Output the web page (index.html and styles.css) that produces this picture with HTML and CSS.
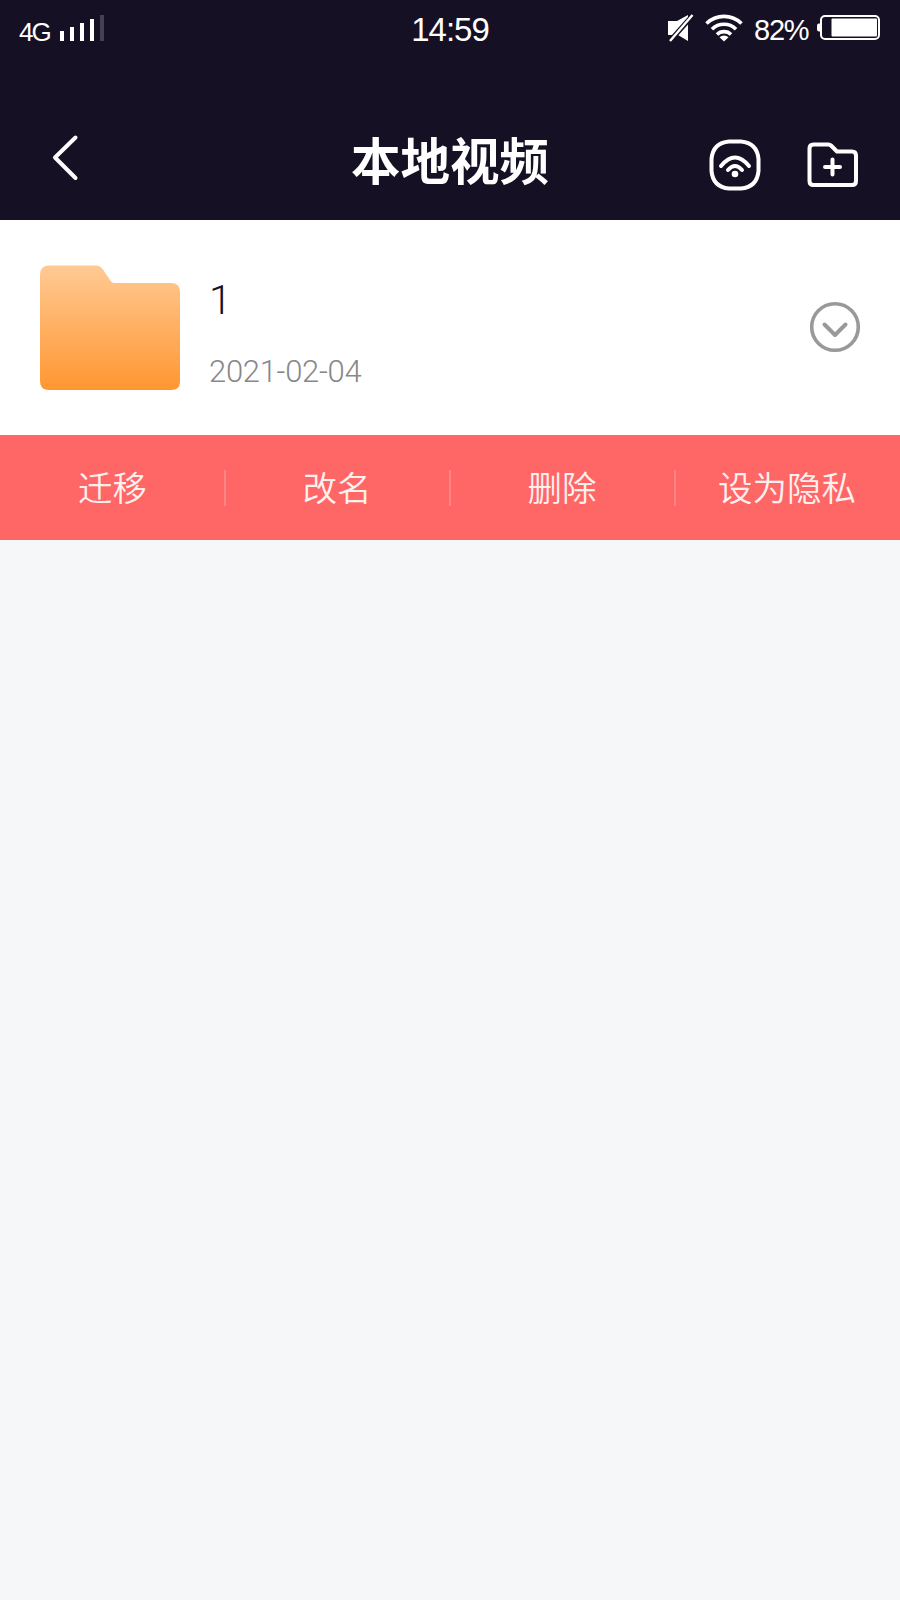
FILE: index.html
```
<!DOCTYPE html>
<html lang="zh-CN">
<head>
    <meta charset="UTF-8">
    <title>本地视频</title>
    <link rel="stylesheet" href="styles.css">
</head>
<body>
<div class="status">
    <div class="status-left">
        <span class="net">4G</span>
        <svg class="signal" width="45" height="28" viewBox="0 0 45 28" fill="#fff">
            <rect x="0" y="17" width="4" height="10"/>
            <rect x="10" y="13" width="4" height="14"/>
            <rect x="20" y="9" width="4" height="18"/>
            <rect x="30" y="5" width="4" height="22"/>
            <rect x="40" y="1" width="4" height="26" fill="#454150"/>
        </svg>
    </div>
    <div class="time">14:59</div>
    <div class="status-right">
        <svg class="mute" width="28" height="28" viewBox="0 0 28 28">
            <path d="M1 7h9L21 1v26l-10-6H1z" fill="#fff"/>
            <path d="M26 1L3 27" stroke="#151023" stroke-width="5"/>
            <path d="M25.500 1L3 27" stroke="#fff" stroke-width="2.400"/>
        </svg>
        <svg class="wifi" width="38" height="28" viewBox="0 0 38 28" fill="none" stroke="#fff" stroke-width="3.600">
            <path d="M1.500 9.500a25 25 0 0 1 35 0"/>
            <path d="M7 15.200a17 17 0 0 1 24 0"/>
            <path d="M12 20.500a10 10 0 0 1 14 0"/>
            <path d="M14.500 23.200a6.500 6.500 0 0 1 9 0L19 27.500z" fill="#fff" stroke="none"/>
        </svg>
        <span class="percent">82%</span>
        <svg class="battery" width="65" height="28" viewBox="0 0 65 28">
            <path d="M4 9.500H3a2 2 0 0 0-2 2v4a2 2 0 0 0 2 2h1z" fill="#fff"/>
            <rect x="5" y="2" width="58" height="23" rx="4" fill="none" stroke="#fff" stroke-width="2"/>
            <rect x="15.500" y="4.500" width="45.500" height="18" rx="1" fill="#fff"/>
        </svg>
    </div>
</div>

<div class="header">
    <svg class="back" width="30" height="50" viewBox="0 0 30 50" fill="none" stroke="#fff" stroke-width="4" stroke-linecap="round" stroke-linejoin="round">
        <path d="M25.500 4.500L5 24.500l20.500 20.500"/>
    </svg>
    <h1 class="title">本地视频</h1>
    <div class="tools">
        <svg width="52" height="52" viewBox="0 0 52 52" fill="none" stroke="#fff" stroke-width="4" stroke-linecap="round">
            <path d="M20 2.500h12C43 3.500 48.500 9 49.500 20v12C48.500 43 43 48.500 32 49.500H20C9 48.500 3.500 43 2.500 32V20C3.500 9 9 3.500 20 2.500z"/>
            <path d="M12 27q14-17 28 0"/>
            <path d="M19 31q7-8 14 0"/>
            <circle cx="26" cy="35" r="3.300" fill="#fff" stroke="none"/>
        </svg>
        <svg width="52" height="52" viewBox="0 0 52 52" fill="none" stroke="#fff" stroke-width="4" stroke-linecap="round" stroke-linejoin="round">
            <path d="M6.500 5.500h15q1.500 0 2.500 1l6 6h15q4 0 4 4V42q0 4-4 4H6.500q-4 0-4-4V9.500q0-4 4-4z"/>
            <path d="M18 28h15M25.500 20.500v15" stroke-width="4"/>
        </svg>
    </div>
</div>

<div class="item">
    <svg class="folder" width="140" height="126" viewBox="0 0 140 126">
        <defs>
            <linearGradient id="folderBg" x1="0" y1="0" x2="0" y2="1">
                <stop offset="0" stop-color="#ffca94"/>
                <stop offset="1" stop-color="#ff9631"/>
            </linearGradient>
        </defs>
        <path d="M9 0.500h47q4 0 7 4l8 12q1.500 1.500 4 1.500h56q9 0 9 9v90q0 8-9 8H9q-9 0-9-9V10Q0 0.500 9 0.500z" fill="url(#folderBg)"/>
    </svg>
    <div class="info">
        <p class="name">1</p>
        <p class="date">2021-02-04</p>
    </div>
    <svg class="more" width="52" height="52" viewBox="0 0 52 52" fill="none" stroke="#999" stroke-width="3.600" stroke-linecap="round" stroke-linejoin="round">
        <circle cx="26" cy="26" r="23.300"/>
        <path d="M15.500 23.500L26 34l10.500-10.500" stroke-width="4"/>
    </svg>
</div>

<ul class="actions">
    <li>迁移</li>
    <li>改名</li>
    <li>删除</li>
    <li>设为隐私</li>
</ul>
</body>
</html>
```

FILE: styles.css
```
* {
    margin: 0;
    padding: 0;
    box-sizing: border-box;
}

body {
    min-height: 1600px;
    background: #f5f7f9;
    font-family: "Liberation Sans", "Noto Sans CJK SC", sans-serif;
}

ul {
    list-style: none;
}

svg {
    display: block;
    flex: none;
}

.status {
    display: grid;
    grid-template-columns: 1fr auto 1fr;
    height: 60px;
    padding: 0 19px;
    background: #151023;
    color: #fff;
    line-height: 60px;
}

.status-left, .status-right {
    display: flex;
}

.status-right {
    justify-content: flex-end;
}

.net {
    width: 41px;
    padding-top: 2px;
    font-size: 26px;
    letter-spacing: -2px;
}

.signal {
    margin-top: 14px;
}

.time {
    font-size: 33px;
    letter-spacing: -1px;
}

.mute {
    margin: 14px 10px 0 0;
}

.wifi {
    margin: 14px 11px 0 0;
}

.percent {
    width: 62px;
    font-size: 29px;
    letter-spacing: -1.2px;
}

.battery {
    margin-top: 14px;
}

.header {
    display: grid;
    grid-template-columns: 1fr auto 1fr;
    height: 160px;
    padding: 0 41px 0 50px;
    background: #151023;
    color: #fff;
}

.back {
    margin-top: 73px;
}

.title {
    padding: 63px 9px 0 0;
    font: bold 49.5px/72px "Noto Sans CJK SC", sans-serif;
}

.tools {
    display: flex;
    justify-content: flex-end;
    gap: 46px;
    padding-top: 79px;
}

.item {
    display: flex;
    align-items: center;
    height: 215px;
    padding: 0 39px 0 40px;
    background: #fff;
}

.info {
    flex: 1;
    padding: 13px 0 0 29px;
    font-family: Roboto, "Liberation Sans", sans-serif;
    font-weight: 300;
}

.name {
    height: 75px;
    color: #151023;
    font-size: 41px;
    line-height: 50px;
}

.date {
    color: #888;
    font-size: 31px;
    line-height: 44px;
    letter-spacing: -0.3px;
}

.more {
    margin-bottom: 1px;
}

.actions {
    display: grid;
    grid-template-columns: repeat(4, 1fr);
    height: 105px;
    background: #f66;
    color: #fff0f0;
    font: 350 34.5px/103px "Noto Sans CJK SC", sans-serif;
    text-align: center;
}

.actions li + li {
    display: grid;
    grid-template-columns: 2px 1fr 3px;
}

.actions li + li::before {
    content: "";
    width: 2px;
    height: 36px;
    margin: 35px 0 0 -1px;
    background: #ff8585;
}
```
